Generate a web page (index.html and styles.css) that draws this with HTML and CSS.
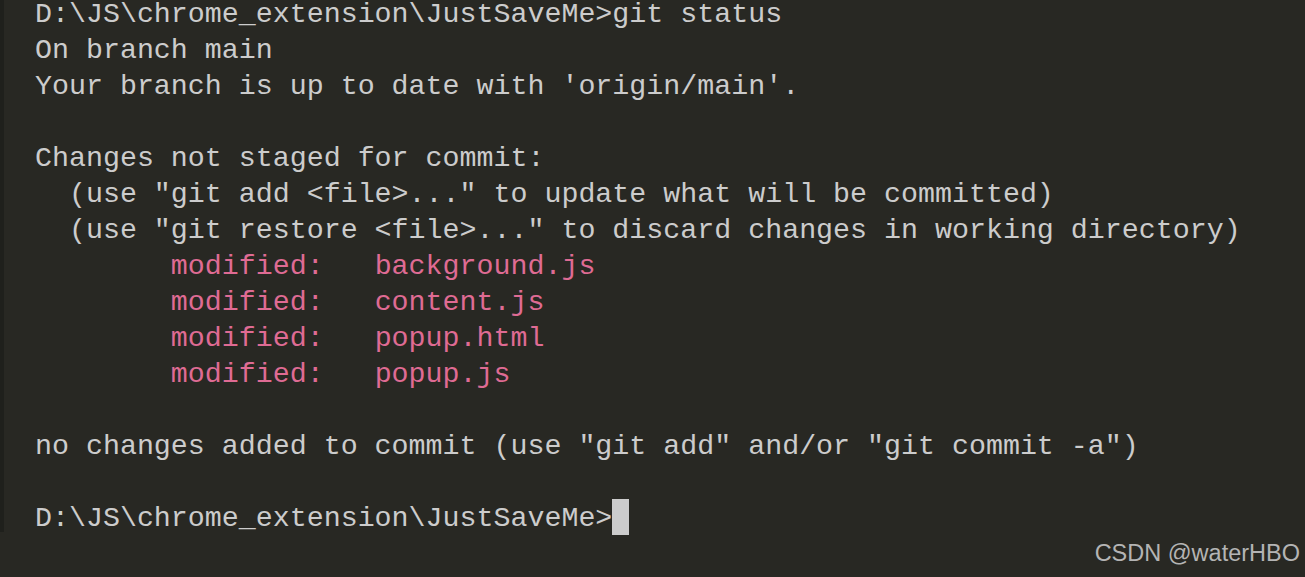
FILE: index.html
```html
<!DOCTYPE html>
<html>
<head>
<meta charset="utf-8">
<link rel="stylesheet" href="styles.css">
</head>
<body>
<div class="screen">
  <div class="terminal">
    <pre class="out">D:\JS\chrome_extension\JustSaveMe&gt;git status
On branch main
Your branch is up to date with 'origin/main'.

Changes not staged for commit:
  (use "git add &lt;file&gt;..." to update what will be committed)
  (use "git restore &lt;file&gt;..." to discard changes in working directory)
        <span class="mod">modified:   background.js</span>
        <span class="mod">modified:   content.js</span>
        <span class="mod">modified:   popup.html</span>
        <span class="mod">modified:   popup.js</span>

no changes added to commit (use "git add" and/or "git commit -a")

D:\JS\chrome_extension\JustSaveMe&gt;<span class="cursor"></span></pre>
  </div>
  <div class="watermark">CSDN @waterHBO</div>
</div>
</body>
</html>
```
FILE: styles.css
```css
html, body {
  margin: 0;
  padding: 0;
  background: #282823;
}
.screen {
  position: relative;
  width: 1305px;
  height: 577px;
  overflow: hidden;
  background: #282823;
}
.terminal {
  height: 536px;
  border-left: 4px solid #1f201c;
  box-sizing: border-box;
  padding-left: 31px;
}
.out {
  margin: 0;
  margin-top: -4px;
  font-family: "Liberation Mono", "DejaVu Sans Mono", monospace;
  font-size: 28.3px;
  line-height: 36px;
  color: #cccccc;
  white-space: pre;
}
.mod {
  color: #df6b93;
}
.cursor {
  display: inline-block;
  width: 17px;
  height: 36px;
  margin-top: -1px;
  background: #cccccc;
  vertical-align: top;
}
.watermark {
  position: absolute;
  right: 5px;
  top: 538px;
  font-family: "Liberation Sans", Arial, sans-serif;
  font-size: 23.5px;
  color: #b4b4b4;
  line-height: 30px;
}
```
